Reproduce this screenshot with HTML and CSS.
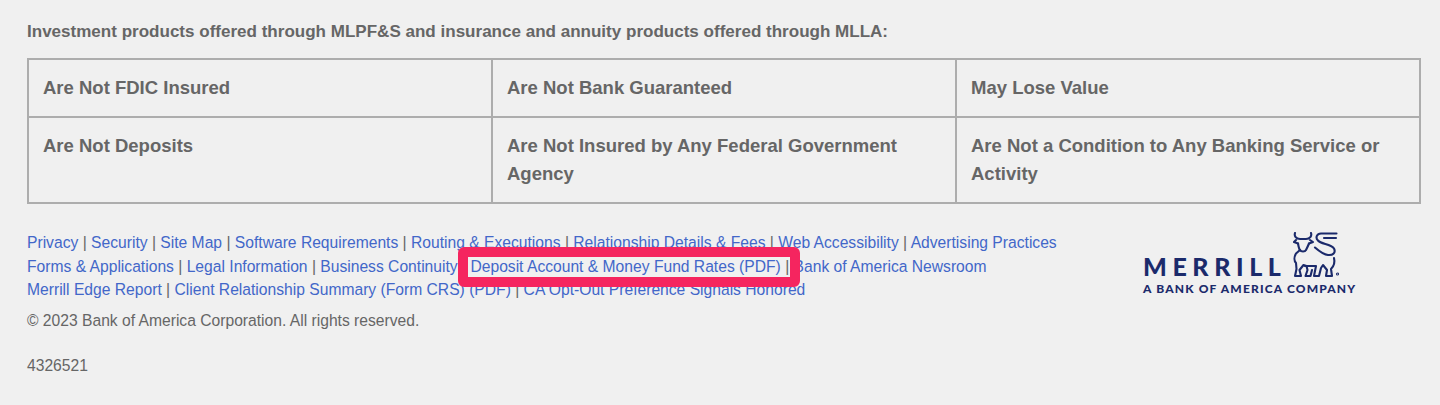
FILE: index.html
```html
<!DOCTYPE html>
<html lang="en">
<head>
  <meta charset="UTF-8">
  <meta name="viewport" content="width=device-width, initial-scale=1.0">
  <title>Merrill footer</title>
  <link rel="stylesheet" href="styles.css">
</head>
<body>
  <p class="disclosure-title">Investment products offered through MLPF&amp;S and insurance and annuity products offered through MLLA:</p>

  <table class="disclosure-table">
    <tr>
      <td>Are Not FDIC Insured</td>
      <td>Are Not Bank Guaranteed</td>
      <td>May Lose Value</td>
    </tr>
    <tr>
      <td>Are Not Deposits</td>
      <td>Are Not Insured by Any Federal Government Agency</td>
      <td>Are Not a Condition to Any Banking Service or Activity</td>
    </tr>
  </table>

  <div class="footer">
    <div class="footer-text">
      <div class="footer-links">
        <a href="#">Privacy</a> | <a href="#">Security</a> | <a href="#">Site Map</a> | <a href="#">Software Requirements</a> | <a href="#">Routing &amp; Executions</a> | <a href="#">Relationship Details &amp; Fees</a> | <a href="#">Web Accessibility</a> | <a href="#">Advertising Practices</a><br>
        <a href="#">Forms &amp; Applications</a> | <a href="#">Legal Information</a> | <a href="#">Business Continuity</a> | <span class="highlight-wrap"><a href="#">Deposit Account &amp; Money Fund Rates (PDF)</a> |<span class="highlight"></span></span> <a href="#">Bank of America Newsroom</a><br>
        <a href="#">Merrill Edge Report</a> | <a href="#">Client Relationship Summary (Form CRS) (PDF)</a> | <a href="#">CA Opt-Out Preference Signals Honored</a>
      </div>
      <p class="copyright">© 2023 Bank of America Corporation. All rights reserved.</p>
      <p class="code">4326521</p>
    </div>

    <div class="logo">
      <div class="logo-top">
        <span class="logo-name">MERRILL</span>
        <svg class="bull" viewBox="0 0 46 46" fill="none" stroke="#1b2a6b" stroke-width="2.100" stroke-linejoin="round" stroke-linecap="round">
          <path d="M2 1C1 4 3 7 7 7h6c4 0 6-3 5-6"/>
          <path d="M3 8 1 10l4 1.500M17 8l3 2-4 1.500"/>
          <path d="M5 11.500c.5 3 1 5.500 2 6.500 1 2 5 2 6 0 1-2 2-4 3-6.500"/>
          <path d="M7 18l-4 3.500C1 25 1 29 3 31l.5 6L2 44h6L6.500 38l4-5 3 1 1 4-2 6h5L19 38"/>
          <path d="M12 34h11l-2 10h5L28 36l2-3 4 5-1 6h6L38 37c3-3 4-7 3-11"/>
          <path d="M43.500 1.500H28c-4 0-6 4-3 7 3 4 13 3 16 8 2 4-1 7-6 6.500-5-.5-9-4-13-7.500"/>
          <path d="M43 6H31"/>
          <circle cx="44.500" cy="42" r=".5"/>
        </svg>
      </div>
      <div class="logo-sub">A BANK OF AMERICA COMPANY</div>
    </div>
  </div>
</body>
</html>
```

FILE: styles.css
```css
body {
  font-family: "Liberation Sans", Arial, sans-serif;
  background-color: #f0f0f0;
  color: #666;
  margin: 0;
  padding: 23px 19px 0 27px;
  font-size: 15.65px;
}
.disclosure-title {
  font-size: 17.05px;
  font-weight: bold;
  line-height: 18px;
  margin: 0 0 17px;
}
.disclosure-table {
  width: 100%;
  border-collapse: collapse;
  table-layout: fixed;
  font-size: 18.5px;
  font-weight: bold;
}
.disclosure-table td {
  border: 2px solid #adadad;
  padding: 14px;
  line-height: 28px;
  vertical-align: top;
}
.footer {
  display: flex;
  justify-content: space-between;
  margin-top: 27px;
}
.footer-links {
  line-height: 23.5px;
  color: #666;
}
.footer-links a {
  color: #4267c9;
  text-decoration: none;
}
.highlight-wrap {
  position: relative;
}
.highlight {
  position: absolute;
  left: -12px;
  right: -11px;
  top: -11px;
  bottom: -12px;
  border: 10px solid #f5255f;
  border-radius: 6px;
}
.copyright {
  margin: 10px 0 0;
  line-height: 18px;
}
.code {
  margin: 27px 0 0;
  line-height: 18px;
}
.logo {
  width: 214px;
  margin: 1px 64px 0 0;
  color: #1b2a6b;
}
.logo-top {
  display: flex;
  align-items: flex-end;
  gap: 12px;
}
.logo-name {
  font-family: "Lato", sans-serif;
  font-size: 25px;
  font-weight: 900;
  letter-spacing: 5.600px;
  line-height: 24px;
  margin-right: -5.600px;
}
.bull {
  width: 46px;
  height: 46px;
}
.logo-sub {
  font-family: "Lato", sans-serif;
  font-size: 12px;
  font-weight: 900;
  letter-spacing: 1.150px;
  line-height: 14px;
  margin-top: 4px;
  white-space: nowrap;
}
```
